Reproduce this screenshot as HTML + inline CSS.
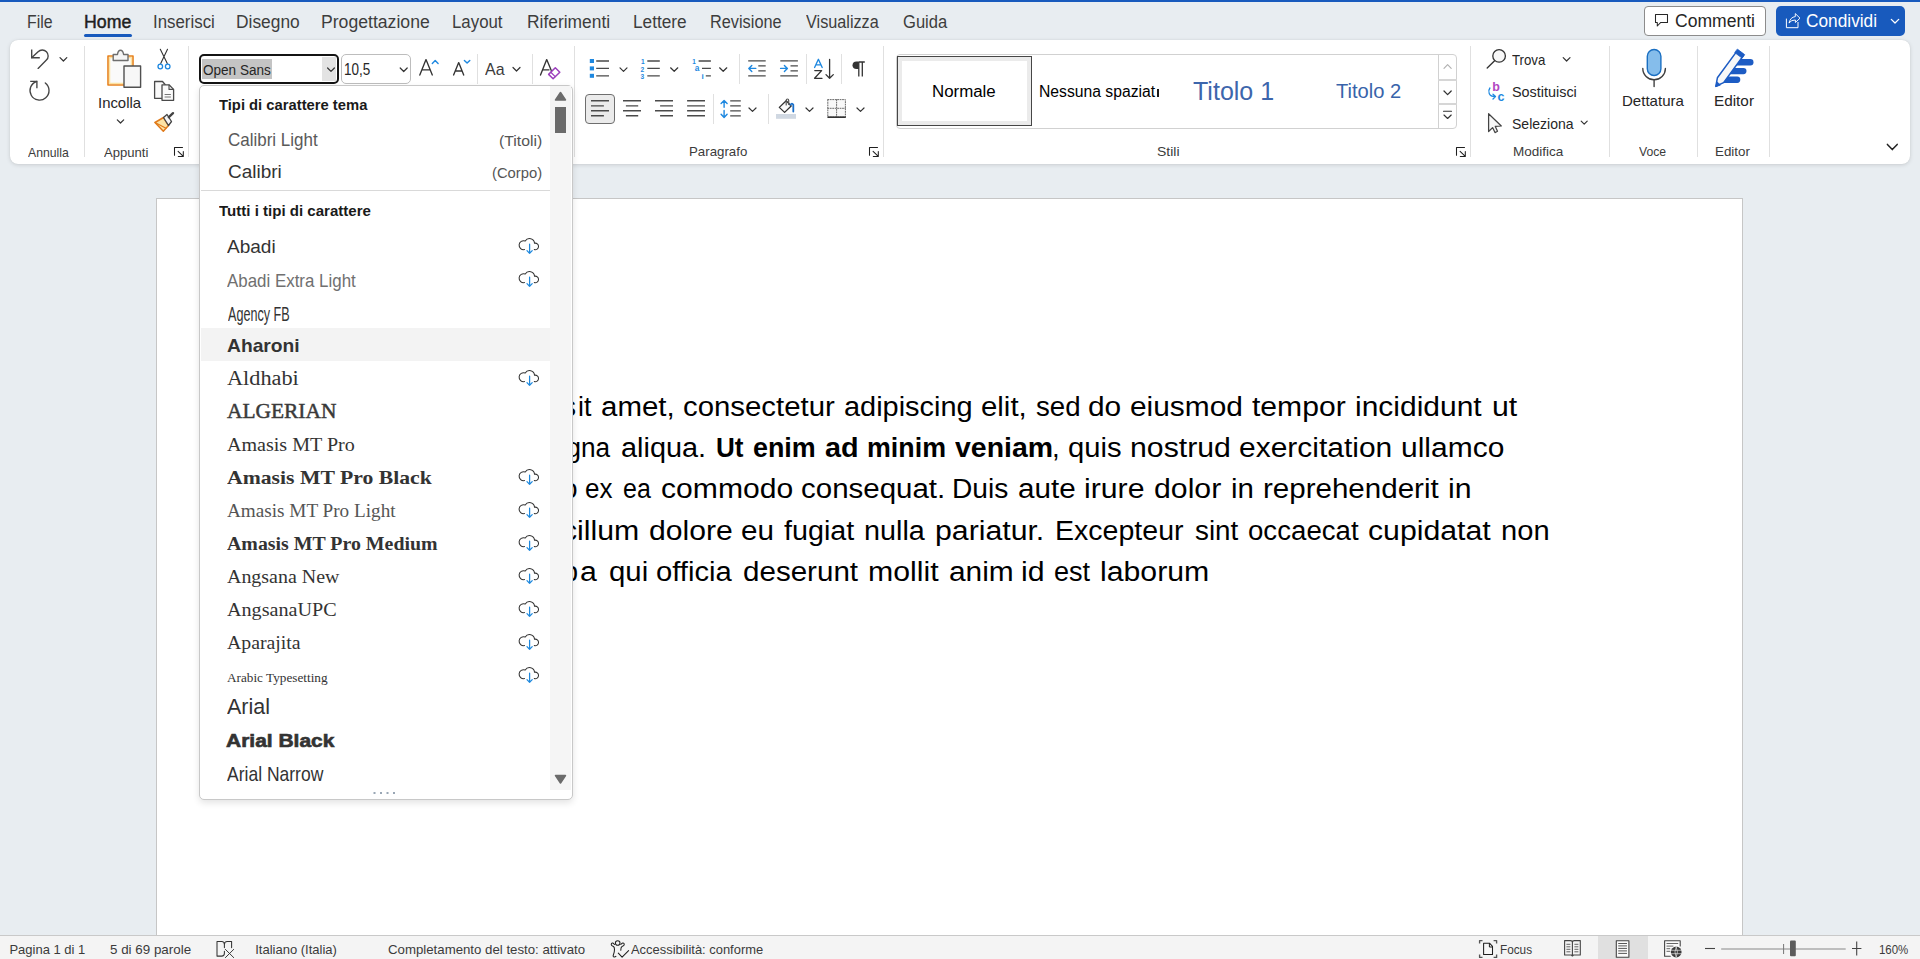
<!DOCTYPE html>
<html><head><meta charset="utf-8"><style>
html,body{margin:0;padding:0;width:1920px;height:959px;overflow:hidden;background:#e8edf1;position:relative}
.t{position:absolute;white-space:pre;transform-origin:0 0}
.a{position:absolute;box-sizing:border-box}
.dv{position:absolute;width:1px;background:#e0e0e0}
svg{position:absolute;overflow:visible}
#dd{position:absolute;left:0;top:0;z-index:10}

</style></head><body>
<div class="a" style="left:0;top:0;width:1920px;height:2px;background:#185abd"></div>
<div class="a" style="left:84px;top:34px;width:48px;height:3px;background:#185abd;border-radius:2px"></div>
<div class="a" style="left:1644px;top:6px;width:122px;height:30px;border:1px solid #8c8c8c;border-radius:4px;background:#fff"></div>
<div class="a" style="left:1776px;top:6px;width:129px;height:30px;background:#185abd;border-radius:5px"></div>
<!-- ribbon -->
<div class="a" style="left:10px;top:40px;width:1900px;height:124px;background:#fff;border-radius:8px;box-shadow:0 1px 4px rgba(0,0,0,.13),0 0 1px rgba(0,0,0,.12)"></div>
<div class="dv" style="left:84px;top:46px;height:111px"></div>
<div class="dv" style="left:188px;top:46px;height:111px"></div>
<div class="dv" style="left:574px;top:46px;height:111px"></div>
<div class="dv" style="left:883px;top:46px;height:111px"></div>
<div class="dv" style="left:1470px;top:46px;height:111px"></div>
<div class="dv" style="left:1609px;top:46px;height:111px"></div>
<div class="dv" style="left:1697px;top:46px;height:111px"></div>
<div class="dv" style="left:1769px;top:46px;height:111px"></div>
<div class="dv" style="left:477px;top:54px;height:30px"></div>
<div class="dv" style="left:532px;top:54px;height:30px"></div>
<div class="dv" style="left:739px;top:54px;height:30px"></div>
<div class="dv" style="left:806px;top:54px;height:30px"></div>
<div class="dv" style="left:841px;top:54px;height:30px"></div>
<div class="dv" style="left:713px;top:94px;height:30px"></div>
<div class="dv" style="left:768px;top:94px;height:30px"></div>
<!-- font box -->
<div class="a" style="left:199px;top:54px;width:140px;height:30px;border:2.5px solid #141414;border-radius:5px;background:#fff"></div>
<div class="a" style="left:202px;top:59px;width:70px;height:20px;background:#c4c4c4"></div>
<div class="a" style="left:322px;top:57px;width:14px;height:24px;background:#e3e3e3"></div>
<div class="a" style="left:341px;top:54px;width:70px;height:30px;border:1px solid #bdbdbd;border-radius:5px;background:#fff"></div>
<!-- align left selected -->
<div class="a" style="left:585px;top:94px;width:30px;height:30px;border:1px solid #6e6e6e;border-radius:4px;background:#ebebeb"></div>
<!-- styles gallery -->
<div class="a" style="left:896px;top:54px;width:561px;height:75px;border:1px solid #d1d1d1;border-radius:4px;background:#fff"></div>
<div class="a" style="left:897px;top:56px;width:135px;height:70px;border:1px solid #464646;background:#fff"></div>
<div class="a" style="left:898px;top:57px;width:133px;height:68px;border:4px solid #ebebeb"></div>
<div class="a" style="left:1438px;top:54px;width:1px;height:75px;background:#d1d1d1"></div>
<div class="a" style="left:1438px;top:79px;width:19px;height:2px;background:#d6d6d6"></div>
<div class="a" style="left:1438px;top:102.5px;width:19px;height:2px;background:#d6d6d6"></div>
<div class="a" style="left:1157px;top:89px;width:2px;height:8px;background:#1a1a1a"></div>
<!-- page -->
<div class="a" style="left:156px;top:198px;width:1587px;height:760px;border:1px solid #c6c6c6;background:#fff"></div>
<span class="t" style="left:562.50px;top:394.04px;font:400 27px/27px 'Liberation Sans';color:#000000;">s</span>
<span class="t" style="left:577.91px;top:394.04px;font:400 27px/27px 'Liberation Sans';color:#000000;transform:scaleX(0.9924);">it</span>
<span class="t" style="left:601.21px;top:394.04px;font:400 27px/27px 'Liberation Sans';color:#000000;transform:scaleX(1.0911);">amet,</span>
<span class="t" style="left:682.66px;top:394.04px;font:400 27px/27px 'Liberation Sans';color:#000000;transform:scaleX(1.0878);">consectetur</span>
<span class="t" style="left:843.93px;top:394.04px;font:400 27px/27px 'Liberation Sans';color:#000000;transform:scaleX(1.0715);">adipiscing</span>
<span class="t" style="left:980.91px;top:394.04px;font:400 27px/27px 'Liberation Sans';color:#000000;transform:scaleX(1.0882);">elit,</span>
<span class="t" style="left:1035.50px;top:394.04px;font:400 27px/27px 'Liberation Sans';color:#000000;transform:scaleX(1.0231);">sed</span>
<span class="t" style="left:1088.39px;top:394.04px;font:400 27px/27px 'Liberation Sans';color:#000000;transform:scaleX(1.1065);">do</span>
<span class="t" style="left:1129.89px;top:394.04px;font:400 27px/27px 'Liberation Sans';color:#000000;transform:scaleX(1.1066);">eiusmod</span>
<span class="t" style="left:1252.20px;top:394.04px;font:400 27px/27px 'Liberation Sans';color:#000000;transform:scaleX(1.1149);">tempor</span>
<span class="t" style="left:1355.29px;top:394.04px;font:400 27px/27px 'Liberation Sans';color:#000000;transform:scaleX(1.1103);">incididunt</span>
<span class="t" style="left:1491.88px;top:394.04px;font:400 27px/27px 'Liberation Sans';color:#000000;transform:scaleX(1.1200);">ut</span>
<span class="t" style="left:566.00px;top:434.94px;font:400 27px/27px 'Liberation Sans';color:#000000;">g</span>
<span class="t" style="left:581.03px;top:434.94px;font:400 27px/27px 'Liberation Sans';color:#000000;transform:scaleX(0.9695);">na</span>
<span class="t" style="left:620.53px;top:434.94px;font:400 27px/27px 'Liberation Sans';color:#000000;transform:scaleX(1.0693);">aliqua.</span>
<span class="t" style="left:715.73px;top:434.94px;font:700 27px/27px 'Liberation Sans';color:#000000;transform:scaleX(0.9655);">Ut</span>
<span class="t" style="left:752.75px;top:434.94px;font:700 27px/27px 'Liberation Sans';color:#000000;transform:scaleX(0.9957);">enim</span>
<span class="t" style="left:825.00px;top:434.94px;font:700 27px/27px 'Liberation Sans';color:#000000;transform:scaleX(1.0661);">ad</span>
<span class="t" style="left:866.51px;top:434.94px;font:700 27px/27px 'Liberation Sans';color:#000000;transform:scaleX(0.9935);">minim</span>
<span class="t" style="left:955.00px;top:434.94px;font:700 27px/27px 'Liberation Sans';color:#000000;transform:scaleX(1.0539);">veniam</span>
<span class="t" style="left:1051.95px;top:434.94px;font:400 27px/27px 'Liberation Sans';color:#000000;transform:scaleX(1.0250);">,</span>
<span class="t" style="left:1067.52px;top:434.94px;font:400 27px/27px 'Liberation Sans';color:#000000;transform:scaleX(1.0806);">quis</span>
<span class="t" style="left:1129.88px;top:434.94px;font:400 27px/27px 'Liberation Sans';color:#000000;transform:scaleX(1.1200);">nostrud</span>
<span class="t" style="left:1239.39px;top:434.94px;font:400 27px/27px 'Liberation Sans';color:#000000;transform:scaleX(1.1098);">exercitation</span>
<span class="t" style="left:1400.89px;top:434.94px;font:400 27px/27px 'Liberation Sans';color:#000000;transform:scaleX(1.1107);">ullamco</span>
<span class="t" style="left:562.50px;top:476.04px;font:400 27px/27px 'Liberation Sans';color:#000000;">o</span>
<span class="t" style="left:585.29px;top:476.04px;font:400 27px/27px 'Liberation Sans';color:#000000;transform:scaleX(0.9637);">ex</span>
<span class="t" style="left:622.83px;top:476.04px;font:400 27px/27px 'Liberation Sans';color:#000000;transform:scaleX(0.9245);">ea</span>
<span class="t" style="left:660.88px;top:476.04px;font:400 27px/27px 'Liberation Sans';color:#000000;transform:scaleX(1.1156);">commodo</span>
<span class="t" style="left:801.41px;top:476.04px;font:400 27px/27px 'Liberation Sans';color:#000000;transform:scaleX(1.0918);">consequat.</span>
<span class="t" style="left:952.41px;top:476.04px;font:400 27px/27px 'Liberation Sans';color:#000000;transform:scaleX(1.0434);">Duis</span>
<span class="t" style="left:1017.65px;top:476.04px;font:400 27px/27px 'Liberation Sans';color:#000000;transform:scaleX(1.0973);">aute</span>
<span class="t" style="left:1083.58px;top:476.04px;font:400 27px/27px 'Liberation Sans';color:#000000;transform:scaleX(1.1200);">irure</span>
<span class="t" style="left:1154.08px;top:476.04px;font:400 27px/27px 'Liberation Sans';color:#000000;transform:scaleX(1.1200);">dolor</span>
<span class="t" style="left:1231.31px;top:476.04px;font:400 27px/27px 'Liberation Sans';color:#000000;transform:scaleX(1.0896);">in</span>
<span class="t" style="left:1262.51px;top:476.04px;font:400 27px/27px 'Liberation Sans';color:#000000;transform:scaleX(1.0937);">reprehenderit</span>
<span class="t" style="left:1448.08px;top:476.04px;font:400 27px/27px 'Liberation Sans';color:#000000;transform:scaleX(1.1200);">in</span>
<span class="t" style="left:563.50px;top:517.64px;font:400 27px/27px 'Liberation Sans';color:#000000;">c</span>
<span class="t" style="left:576.98px;top:517.64px;font:400 27px/27px 'Liberation Sans';color:#000000;transform:scaleX(1.1200);">illum</span>
<span class="t" style="left:649.38px;top:517.64px;font:400 27px/27px 'Liberation Sans';color:#000000;transform:scaleX(1.1159);">dolore</span>
<span class="t" style="left:741.40px;top:517.64px;font:400 27px/27px 'Liberation Sans';color:#000000;transform:scaleX(1.0976);">eu</span>
<span class="t" style="left:783.75px;top:517.64px;font:400 27px/27px 'Liberation Sans';color:#000000;transform:scaleX(1.0631);">fugiat</span>
<span class="t" style="left:863.93px;top:517.64px;font:400 27px/27px 'Liberation Sans';color:#000000;transform:scaleX(1.0652);">nulla</span>
<span class="t" style="left:935.13px;top:517.64px;font:400 27px/27px 'Liberation Sans';color:#000000;transform:scaleX(1.1200);">pariatur.</span>
<span class="t" style="left:1055.49px;top:517.64px;font:400 27px/27px 'Liberation Sans';color:#000000;transform:scaleX(1.0571);">Excepteur</span>
<span class="t" style="left:1194.50px;top:517.64px;font:400 27px/27px 'Liberation Sans';color:#000000;transform:scaleX(1.0279);">sint</span>
<span class="t" style="left:1247.68px;top:517.64px;font:400 27px/27px 'Liberation Sans';color:#000000;transform:scaleX(1.0236);">occaecat</span>
<span class="t" style="left:1368.18px;top:517.64px;font:400 27px/27px 'Liberation Sans';color:#000000;transform:scaleX(1.1200);">cupidatat</span>
<span class="t" style="left:1500.92px;top:517.64px;font:400 27px/27px 'Liberation Sans';color:#000000;transform:scaleX(1.0783);">non</span>
<span class="t" style="left:563.00px;top:559.14px;font:400 27px/27px 'Liberation Sans';color:#000000;">p</span>
<span class="t" style="left:580.38px;top:559.14px;font:400 27px/27px 'Liberation Sans';color:#000000;transform:scaleX(1.1200);">a</span>
<span class="t" style="left:608.91px;top:559.14px;font:400 27px/27px 'Liberation Sans';color:#000000;transform:scaleX(1.0872);">qui</span>
<span class="t" style="left:656.42px;top:559.14px;font:400 27px/27px 'Liberation Sans';color:#000000;transform:scaleX(1.0817);">officia</span>
<span class="t" style="left:742.66px;top:559.14px;font:400 27px/27px 'Liberation Sans';color:#000000;transform:scaleX(1.0949);">deserunt</span>
<span class="t" style="left:867.63px;top:559.14px;font:400 27px/27px 'Liberation Sans';color:#000000;transform:scaleX(1.1200);">mollit</span>
<span class="t" style="left:948.89px;top:559.14px;font:400 27px/27px 'Liberation Sans';color:#000000;transform:scaleX(1.1065);">anim</span>
<span class="t" style="left:1021.38px;top:559.14px;font:400 27px/27px 'Liberation Sans';color:#000000;transform:scaleX(1.1200);">id</span>
<span class="t" style="left:1053.90px;top:559.14px;font:400 27px/27px 'Liberation Sans';color:#000000;transform:scaleX(1.0024);">est</span>
<span class="t" style="left:1099.88px;top:559.14px;font:400 27px/27px 'Liberation Sans';color:#000000;transform:scaleX(1.1200);">laborum</span>
<!-- status bar -->
<div class="a" style="left:0;top:935px;width:1920px;height:24px;background:#f4f4f4;border-top:1px solid #c9c9c9"></div>
<div class="a" style="left:1598px;top:936px;width:50px;height:23px;background:#e0e0e0"></div>
<span class="t" style="left:26.59px;top:13.68px;font:400 17.5px/17.5px 'Liberation Sans';color:#3d3d3d;transform:scaleX(0.9068);">File</span>
<span class="t" style="left:83.99px;top:13.68px;font:400 17.5px/17.5px 'Liberation Sans';color:#1f1f1f;transform:scaleX(1.0123);-webkit-text-stroke:0.45px #1f1f1f;">Home</span>
<span class="t" style="left:153.04px;top:13.68px;font:400 17.5px/17.5px 'Liberation Sans';color:#3d3d3d;transform:scaleX(0.9632);">Inserisci</span>
<span class="t" style="left:236.01px;top:13.68px;font:400 17.5px/17.5px 'Liberation Sans';color:#3d3d3d;transform:scaleX(0.9924);">Disegno</span>
<span class="t" style="left:320.99px;top:13.68px;font:400 17.5px/17.5px 'Liberation Sans';color:#3d3d3d;transform:scaleX(1.0070);">Progettazione</span>
<span class="t" style="left:451.84px;top:13.68px;font:400 17.5px/17.5px 'Liberation Sans';color:#3d3d3d;transform:scaleX(0.9617);">Layout</span>
<span class="t" style="left:527.26px;top:13.68px;font:400 17.5px/17.5px 'Liberation Sans';color:#3d3d3d;transform:scaleX(0.9940);">Riferimenti</span>
<span class="t" style="left:633.26px;top:13.68px;font:400 17.5px/17.5px 'Liberation Sans';color:#3d3d3d;transform:scaleX(0.9858);">Lettere</span>
<span class="t" style="left:710.32px;top:13.68px;font:400 17.5px/17.5px 'Liberation Sans';color:#3d3d3d;transform:scaleX(0.9319);">Revisione</span>
<span class="t" style="left:805.75px;top:13.68px;font:400 17.5px/17.5px 'Liberation Sans';color:#3d3d3d;transform:scaleX(0.9272);">Visualizza</span>
<span class="t" style="left:902.50px;top:13.68px;font:400 17.5px/17.5px 'Liberation Sans';color:#3d3d3d;transform:scaleX(0.9475);">Guida</span>
<span class="t" style="left:1674.60px;top:12.46px;font:400 18px/18px 'Liberation Sans';color:#262626;transform:scaleX(0.9751);">Commenti</span>
<span class="t" style="left:1806.40px;top:12.46px;font:400 18px/18px 'Liberation Sans';color:#ffffff;transform:scaleX(0.9597);">Condividi</span>
<span class="t" style="left:28.00px;top:146.09px;font:400 13px/13px 'Liberation Sans';color:#3b3b3b;transform:scaleX(0.9402);">Annulla</span>
<span class="t" style="left:104.00px;top:146.09px;font:400 13px/13px 'Liberation Sans';color:#3b3b3b;transform:scaleX(1.0067);">Appunti</span>
<span class="t" style="left:98.47px;top:95.62px;font:400 14.5px/14.5px 'Liberation Sans';color:#262626;transform:scaleX(1.0275);">Incolla</span>
<span class="t" style="left:689.48px;top:145.49px;font:400 13px/13px 'Liberation Sans';color:#3b3b3b;transform:scaleX(1.0204);">Paragrafo</span>
<span class="t" style="left:1157.30px;top:145.09px;font:400 13px/13px 'Liberation Sans';color:#3b3b3b;transform:scaleX(1.0779);">Stili</span>
<span class="t" style="left:1513.36px;top:145.49px;font:400 13px/13px 'Liberation Sans';color:#3b3b3b;transform:scaleX(1.0399);">Modifica</span>
<span class="t" style="left:1639.30px;top:145.49px;font:400 13px/13px 'Liberation Sans';color:#3b3b3b;transform:scaleX(0.9378);">Voce</span>
<span class="t" style="left:1715.37px;top:145.49px;font:400 13px/13px 'Liberation Sans';color:#3b3b3b;transform:scaleX(1.0288);">Editor</span>
<span class="t" style="left:1511.70px;top:52.72px;font:400 14.5px/14.5px 'Liberation Sans';color:#262626;transform:scaleX(0.9129);">Trova</span>
<span class="t" style="left:1511.70px;top:84.72px;font:400 14.5px/14.5px 'Liberation Sans';color:#262626;transform:scaleX(0.9931);">Sostituisci</span>
<span class="t" style="left:1511.70px;top:116.72px;font:400 14.5px/14.5px 'Liberation Sans';color:#262626;transform:scaleX(0.9672);">Seleziona</span>
<span class="t" style="left:1621.66px;top:93.62px;font:400 14.5px/14.5px 'Liberation Sans';color:#262626;transform:scaleX(1.0373);">Dettatura</span>
<span class="t" style="left:1713.54px;top:93.62px;font:400 14.5px/14.5px 'Liberation Sans';color:#262626;transform:scaleX(1.0553);">Editor</span>
<span class="t" style="left:931.75px;top:83.95px;font:400 16px/16px 'Liberation Sans';color:#000000;transform:scaleX(1.0544);">Normale</span>
<span class="t" style="left:1038.72px;top:83.95px;font:400 16px/16px 'Liberation Sans';color:#000000;transform:scaleX(0.9818);">Nessuna spaziat</span>
<span class="t" style="left:1193.40px;top:78.91px;font:400 25.5px/25.5px 'Liberation Sans';color:#3d66ac;transform:scaleX(0.9817);">Titolo 1</span>
<span class="t" style="left:1336.40px;top:80.84px;font:400 20.5px/20.5px 'Liberation Sans';color:#3863aa;transform:scaleX(0.9824);">Titolo 2</span>
<span class="t" style="left:344.16px;top:61.65px;font:400 16px/16px 'Liberation Sans';color:#262626;transform:scaleX(0.8432);">10,5</span>
<span class="t" style="left:202.50px;top:61.98px;font:400 15.5px/15.5px 'Liberation Sans';color:#262626;transform:scaleX(0.8740);">Open Sans</span>
<span class="t" style="left:485.00px;top:61.11px;font:400 17px/17px 'Liberation Sans';color:#3b3b3b;transform:scaleX(0.9373);">Aa</span>
<span class="t" style="left:9.40px;top:942.99px;font:400 13px/13px 'Liberation Sans';color:#3b3b3b;">Pagina 1 di 1</span>
<span class="t" style="left:110.40px;top:942.99px;font:400 13px/13px 'Liberation Sans';color:#3b3b3b;transform:scaleX(1.0293);">5 di 69 parole</span>
<span class="t" style="left:255.25px;top:942.99px;font:400 13px/13px 'Liberation Sans';color:#3b3b3b;">Italiano (Italia)</span>
<span class="t" style="left:387.50px;top:942.99px;font:400 13px/13px 'Liberation Sans';color:#3b3b3b;transform:scaleX(1.0179);">Completamento del testo: attivato</span>
<span class="t" style="left:631.40px;top:942.99px;font:400 13px/13px 'Liberation Sans';color:#3b3b3b;transform:scaleX(0.9939);">Accessibilità: conforme</span>
<span class="t" style="left:1499.59px;top:942.99px;font:400 13px/13px 'Liberation Sans';color:#3b3b3b;transform:scaleX(0.9054);">Focus</span>
<span class="t" style="left:1879.00px;top:942.99px;font:400 13px/13px 'Liberation Sans';color:#3b3b3b;transform:scaleX(0.8816);">160%</span>
<svg style="left:0;top:0;z-index:2" width="1920" height="959" viewBox="0 0 1920 959">
<g fill="none" stroke-linecap="round" stroke-linejoin="round">
<!-- undo -->
<path d="M38.1 68.4 L46.4 60.1 A5.9 5.9 0 1 0 38.1 51.7 L31.9 57.6" stroke="#444" stroke-width="1.35"/>
<path d="M31.7 49.6 V57.7 H39.8" stroke="#444" stroke-width="1.35" stroke-linecap="butt" stroke-linejoin="miter"/>
<path d="M60 57.6 L63.4 61 L66.8 57.6" stroke="#333" stroke-width="1.2"/>
<!-- redo -->
<path d="M45.3 83 A9.5 9.5 0 1 1 36.6 81.5" stroke="#444" stroke-width="1.35"/>
<path d="M30.2 81.4 H36.9 V88.2" stroke="#444" stroke-width="1.35" stroke-linecap="butt" stroke-linejoin="miter"/>
<!-- paste -->
<rect x="108" y="56" width="25" height="29" fill="#fafafa" stroke="#e8821c" stroke-width="1.6"/>
<rect x="109.6" y="57.6" width="21.8" height="25.8" fill="none" stroke="#fce2a0" stroke-width="1.3"/>
<path d="M113.2 60.5 V54.5 H117.5 Q118 50.3 120.5 50.3 Q123 50.3 123.6 54.5 H128 V60.5 Z" fill="#f5f5f5" stroke="#6e6e6e" stroke-width="1.4"/>
<rect x="124" y="66" width="16.6" height="21.3" fill="#f7f7f7" stroke="#505050" stroke-width="1.4"/>
<path d="M117.3 119.8 L120.5 123 L123.7 119.8" stroke="#333" stroke-width="1.2"/>
<!-- scissors -->
<path d="M160.3 49.3 L167.3 63.5 M167.5 49.3 L160.7 63.5" stroke="#333" stroke-width="1.1"/>
<circle cx="160.3" cy="66.5" r="2.3" stroke="#1e88e0" stroke-width="1.3"/>
<circle cx="167.7" cy="66.5" r="2.3" stroke="#1e88e0" stroke-width="1.3"/>
<!-- copy -->
<path d="M161.5 98.3 H154.6 V81.5 H162.5 L165.3 84.7" stroke="#4a4a4a" stroke-width="1.3" fill="#fafafa"/>
<path d="M162 100.3 V84.8 H169 L173.6 89.4 V100.3 Z" fill="#fafafa" stroke="#4a4a4a" stroke-width="1.3"/>
<path d="M169 85 V89.4 H173.4" stroke="#4a4a4a" stroke-width="1.1"/>
<path d="M165 94.5 H170.5 M165 97 H170.5" stroke="#777" stroke-width="1"/>
<!-- format painter -->
<path d="M155 122.5 L163.5 117.5 L168.5 125.5 L163.3 131.3 Z" fill="#fce3a5" stroke="#e07a1a" stroke-width="1.5"/>
<path d="M155 122.5 L166 128.2" stroke="#e07a1a" stroke-width="1.2"/>
<path d="M163.5 117.5 L167 114.5 L171.5 121.5 L168.5 125.5 Z" fill="#f5f5f5" stroke="#444" stroke-width="1.3"/>
<path d="M168.8 117.2 L173 113.2" stroke="#444" stroke-width="2.4"/>
<!-- font box chevron / size chevron -->
<path d="M327.6 68 L331 71.4 L334.4 68" stroke="#333" stroke-width="1.2"/>
<path d="M400.2 68 L403.7 71.5 L407.2 68" stroke="#333" stroke-width="1.2"/>
<!-- grow / shrink -->
<path d="M419.8 75 L426 59.6 L432.3 75 M422 69.8 H430" stroke="#333" stroke-width="1.35"/>
<path d="M432.3 63.4 L435.2 60.5 L438.1 63.4" stroke="#1e88e0" stroke-width="1.4"/>
<path d="M453.6 75 L458.7 62.6 L463.7 75 M455.5 71 H461.9" stroke="#333" stroke-width="1.35"/>
<path d="M464.4 60.4 L467.1 63.1 L469.8 60.4" stroke="#1e88e0" stroke-width="1.4"/>
<!-- Aa chevron -->
<path d="M513 67.5 L516.5 71 L520 67.5" stroke="#333" stroke-width="1.2"/>
<!-- clear formatting -->
<path d="M540.5 75 L546.7 59.6 L551.5 71" stroke="#333" stroke-width="1.35"/>
<path d="M543 69.8 H549" stroke="#333" stroke-width="1.35"/>
<path d="M548.6 74.4 L555.3 67.8 L559.8 72.2 L553.1 78.8 Z" fill="#fff" stroke="#9c3fbd" stroke-width="1.5"/>
<path d="M550.8 72.2 L555.2 76.6" stroke="#9c3fbd" stroke-width="1.3"/>
<!-- bullets -->
<g fill="#1e88e0" stroke="none"><rect x="589.8" y="59" width="4.2" height="4"/><rect x="589.8" y="66.4" width="4.2" height="4"/><rect x="589.8" y="73.8" width="4.2" height="4"/></g>
<path d="M596.2 61 H609 M596.2 68.4 H609 M596.2 75.8 H609" stroke="#4a4a4a" stroke-width="1.3" stroke-linecap="butt"/>
<path d="M620 67.8 L623.5 71.3 L627 67.8" stroke="#333" stroke-width="1.2"/>
<!-- numbering -->
<g fill="#1e88e0" font-family="Liberation Sans" font-weight="700" font-size="6.6" stroke="none"><text x="641" y="64">1</text><text x="640.6" y="71.5">2</text><text x="640.6" y="79">3</text></g>
<path d="M647.3 61 H659.8 M647.3 68.4 H659.8 M647.3 75.8 H659.8" stroke="#4a4a4a" stroke-width="1.3" stroke-linecap="butt"/>
<path d="M670.6 67.8 L674.2 71.3 L677.8 67.8" stroke="#333" stroke-width="1.2"/>
<!-- multilevel -->
<g fill="#1e88e0" font-family="Liberation Sans" font-weight="700" stroke="none"><text x="692.3" y="64.3" font-size="6.4">1</text><text x="694.8" y="71.4" font-size="8.3">a</text><text x="701.6" y="79.3" font-size="8">i</text></g>
<path d="M698.6 61 H710.9 M702 68.4 H710.9 M705.8 75.8 H710.9" stroke="#4a4a4a" stroke-width="1.3" stroke-linecap="butt"/>
<path d="M719.6 67.8 L723.2 71.3 L726.8 67.8" stroke="#333" stroke-width="1.2"/>
<!-- decrease / increase indent -->
<path d="M748.2 60.8 H765.7 M758.3 65.9 H765.7 M758.3 70.8 H765.7 M748.2 75.8 H765.7" stroke="#4a4a4a" stroke-width="1.35" stroke-linecap="butt"/>
<path d="M749 68.4 H755.8 M751.8 65.4 L748.8 68.4 L751.8 71.4" stroke="#1e88e0" stroke-width="1.4"/>
<path d="M780.3 60.8 H797.9 M790.5 65.9 H797.9 M790.5 70.8 H797.9 M780.3 75.8 H797.9" stroke="#4a4a4a" stroke-width="1.35" stroke-linecap="butt"/>
<path d="M780.6 68.4 H787.3 M784.4 65.4 L787.4 68.4 L784.4 71.4" stroke="#1e88e0" stroke-width="1.4"/>
<!-- sort -->
<path d="M814.6 67.5 L818.4 59.3 L822.2 67.5 M815.9 64.8 H820.9" stroke="#1e88e0" stroke-width="1.35"/>
<path d="M814.8 70.6 H821.6 L814.6 78.3 H822" stroke="#333" stroke-width="1.35"/>
<path d="M829.6 59.3 V78.3 M826 74.6 L829.6 78.3 L833.3 74.6" stroke="#333" stroke-width="1.3"/>
<!-- pilcrow -->
<path d="M858.8 62 H864.8 M858.8 62 V76.6 M862.3 62 V76.6" stroke="#333" stroke-width="1.3" stroke-linecap="butt"/>
<path d="M858.8 61.5 H856.5 Q852.5 61.5 852.5 65.3 Q852.5 69 856.5 69 H858.8 Z" fill="#333" stroke="none"/>
<!-- align -->
<path d="M591 100.8 H609 M591 105.9 H603.9 M591 110.8 H609 M591 115.8 H603.9" stroke="#4a4a4a" stroke-width="1.4" stroke-linecap="butt"/>
<path d="M623 100.8 H641 M625.9 105.9 H638.2 M623 110.8 H641 M625.9 115.8 H638.2" stroke="#4a4a4a" stroke-width="1.4" stroke-linecap="butt"/>
<path d="M655 100.8 H673 M660.1 105.9 H673 M655 110.8 H673 M660.1 115.8 H673" stroke="#4a4a4a" stroke-width="1.4" stroke-linecap="butt"/>
<path d="M687.1 100.8 H705 M687.1 105.9 H705 M687.1 110.8 H705 M687.1 115.8 H705" stroke="#4a4a4a" stroke-width="1.4" stroke-linecap="butt"/>
<!-- line spacing -->
<path d="M724.1 100.8 V107.3 M721.1 103.6 L724.1 100.6 L727.1 103.6 M724.1 110.4 V117.2 M721.1 114.2 L724.1 117.4 L727.1 114.2" stroke="#1e88e0" stroke-width="1.4"/>
<path d="M730.2 100.8 H740.8 M730.2 105.8 H740.8 M730.2 110.8 H740.8 M730.2 115.8 H740.8" stroke="#4a4a4a" stroke-width="1.35" stroke-linecap="butt"/>
<path d="M749 108 L752.5 111.4 L756 108" stroke="#333" stroke-width="1.2"/>
<!-- shading -->
<rect x="776" y="114" width="20" height="4.8" fill="#d0d8e2" stroke="none"/>
<path d="M779.3 107.4 L786.2 100.8 L791.2 106 L784.6 112.4 Z" fill="#fafafa" stroke="#333" stroke-width="1.3"/>
<path d="M786.2 105 V100.5 Q786.2 99 787.5 99 Q788.7 99 788.7 100.5 V104.5" stroke="#555" stroke-width="1.2"/>
<path d="M790.5 104.8 Q792 102.5 793.3 104.8 V111.5" stroke="#1a6fc9" stroke-width="1.8"/>
<path d="M806 108 L809.5 111.4 L813 108" stroke="#333" stroke-width="1.2"/>
<!-- borders -->
<rect x="827.8" y="99.6" width="17.6" height="17.4" fill="#f8f8f8" stroke="#6a6a6a" stroke-width="1" stroke-dasharray="1 1.45"/>
<path d="M836.6 99.6 V117 M827.8 108.3 H845.4" stroke="#6a6a6a" stroke-width="1" stroke-dasharray="1 1.45"/>
<path d="M827.5 117.2 H845.8" stroke="#333" stroke-width="1.6" stroke-linecap="butt"/>
<path d="M857 108 L860.5 111.4 L864 108" stroke="#333" stroke-width="1.2"/>
<!-- launchers -->
<path d="M174.5 155.3 V147.4 H182.5 M178.1 151.3 L183.3 156.4 M178.3 156.4 H183.3 V151.5" stroke="#1f1f1f" stroke-width="1.05"/>
<path d="M869.5 155.3 V147.4 H877.5 M873.1 151.3 L878.3 156.4 M873.3 156.4 H878.3 V151.5" stroke="#1f1f1f" stroke-width="1.05"/>
<path d="M1456.5 155.3 V147.4 H1464.5 M1460.1 151.3 L1465.3 156.4 M1460.3 156.4 H1465.3 V151.5" stroke="#1f1f1f" stroke-width="1.05"/>
<!-- styles gallery scroll -->
<path d="M1444 68.3 L1447.6 64.6 L1451.2 68.3" stroke="#b0b0b0" stroke-width="1.1"/>
<path d="M1444 91 L1447.6 94.6 L1451.2 91" stroke="#333" stroke-width="1.25"/>
<path d="M1443.5 111.2 H1451.5 M1444 115 L1447.6 118.5 L1451.2 115" stroke="#333" stroke-width="1.15"/>
<!-- find -->
<circle cx="1499.1" cy="55.9" r="6.3" fill="#f8f8f8" stroke="#333" stroke-width="1.3"/>
<path d="M1494.6 60.7 L1487.2 68" stroke="#333" stroke-width="1.35"/>
<path d="M1563.2 57.6 L1566.6 61 L1570 57.6" stroke="#333" stroke-width="1.2"/>
<!-- replace -->
<text x="1492.3" y="90.6" font-family="Liberation Sans" font-size="12.5" font-weight="700" fill="#b146c2" stroke="none">b</text>
<text x="1497.4" y="101.3" font-family="Liberation Sans" font-size="12.5" font-weight="700" fill="#1e88e0" stroke="none">c</text>
<path d="M1489.9 88 Q1488 90.5 1489.2 93.5 Q1490.3 96.6 1495.5 96.6 M1493 94.3 L1495.5 96.6 L1493 99" stroke="#1e88e0" stroke-width="1.3"/>
<!-- select -->
<path d="M1488.6 113.7 V131.5 L1492.6 127.6 L1495 132.6 L1497.5 131.3 L1495.3 126.4 L1501.3 126 Z" fill="#f8f8f8" stroke="#444" stroke-width="1.25"/>
<path d="M1581.2 121.2 L1584.2 124.2 L1587.2 121.2" stroke="#333" stroke-width="1.2"/>
<!-- mic -->
<path d="M1642.8 68.5 A11.3 11.3 0 0 0 1665.4 68.5" stroke="#404040" stroke-width="1.4"/>
<path d="M1654.1 80 V86.6" stroke="#404040" stroke-width="1.4"/>
<rect x="1647.3" y="49.5" width="13.6" height="26" rx="6.8" fill="#85bdeb" stroke="#1a6fc2" stroke-width="1.4"/>
<!-- editor -->
<g fill="#1d5cc4" stroke="none">
<rect x="1734" y="59" width="19.5" height="6.4" rx="3.2"/>
<rect x="1727" y="68" width="19.5" height="6.2" rx="3.1"/>
<rect x="1720" y="76.6" width="20.3" height="6.3" rx="3.1"/>
</g>
<path d="M1715.8 86.3 L1717.4 77.8 L1737.3 50.6 L1743.7 55.3 L1723.6 82.6 Z" fill="#f8f8f8" stroke="#1d5cc4" stroke-width="1.5"/>
<path d="M1737.6 49.3 L1744.6 54.6 L1742 58 L1735 52.8 Z" fill="#1d5cc4" stroke="#1d5cc4" stroke-width="0.8"/>
<path d="M1715.8 86.3 L1717.2 82 L1720 84.8 Z" fill="#1d5cc4" stroke="#1d5cc4" stroke-width="1"/>
<!-- ribbon collapse -->
<path d="M1887.4 144.4 L1892.3 149.6 L1897.2 144.4" stroke="#222" stroke-width="1.5"/>
<!-- comment icon -->
<path d="M1655.5 14.5 H1667.5 V22.4 H1660.8 L1657.3 26 V22.4 H1655.5 Z" stroke="#262626" stroke-width="1.05"/>
<!-- share icon -->
<path d="M1786.4 19 V27.7 H1798 V22.4" stroke="#fff" stroke-width="1"/>
<path d="M1789.2 22.6 Q1790.3 17.2 1795.3 16.6 V13.6 L1800 18.2 L1795.4 22.5 V20 Q1791.5 19.8 1789.2 22.6 Z" stroke="#fff" stroke-width="0.95"/>
<path d="M1891.3 19.4 L1895 23 L1898.7 19.4" stroke="#fff" stroke-width="1.3"/>
<!-- status: proofing -->
<path d="M224.4 947.6 V944.5 Q224.4 941.5 221.7 941.5 H217 V956.1 H221.7 Q224.4 956.1 224.4 953.2 V951.3 M224.4 944.5 Q224.4 941.5 227.2 941.5 H231.6 V947.6" stroke="#333" stroke-width="1.05"/>
<path d="M225.4 949.4 L233.7 957.6 M233.7 949.4 L225.4 957.6" stroke="#333" stroke-width="0.95"/>
<!-- accessibility -->
<circle cx="617.7" cy="943" r="2.3" stroke="#222" stroke-width="1.05"/>
<path d="M614.5 944.5 Q612.5 942 611.5 943.5 Q610.5 945.5 613.5 946.5 Q614.5 947.2 614.5 949.5 Q614.5 952 613.5 954.5 Q612.5 957 614.3 957 Q615.4 957 615.9 956.4" stroke="#222" stroke-width="1.05"/>
<path d="M620.8 944.5 Q623 942 624 943.5 Q625 945.5 622 946.5 Q620.8 947.2 620.8 950.3" stroke="#222" stroke-width="1.05"/>
<path d="M618.3 953.2 L622.1 957.1 L628.6 950.6" stroke="#222" stroke-width="1.1"/>
<!-- focus -->
<path d="M1483.6 943.3 H1489.7 L1492.5 946.4 V954.5 H1483.6 Z" fill="#f7f7f7" stroke="#1f1f1f" stroke-width="1.05"/>
<path d="M1489.4 943.5 V947 H1492.4" stroke="#1f1f1f" stroke-width="1"/>
<path d="M1479.6 943.6 V940.6 H1482.5 M1493.6 940.6 H1496.6 V943.6 M1479.6 954.5 V957.4 H1482.5 M1496.6 954.5 V957.4 H1493.6" stroke="#555" stroke-width="1.35" stroke-linecap="butt"/>
<!-- read mode -->
<path d="M1564.6 940.6 H1570.5 Q1572.4 940.6 1572.4 942.5 Q1572.4 940.6 1574.3 940.6 H1580.3 V955 H1573.5 L1572.4 956 L1571.3 955 H1564.6 Z M1572.4 942.5 V955.5" stroke="#444" stroke-width="1.1"/>
<path d="M1566.8 944.3 H1570 M1566.8 946.8 H1570 M1566.8 949.3 H1570 M1566.8 951.8 H1570 M1574.8 944.3 H1578 M1574.8 946.8 H1578 M1574.8 949.3 H1578 M1574.8 951.8 H1578" stroke="#555" stroke-width="0.9"/>
<!-- print layout -->
<rect x="1616.3" y="940.7" width="12.6" height="16.5" fill="#fafafa" stroke="#444" stroke-width="1.1"/>
<path d="M1618.6 943.5 H1626.6 M1618.6 945.9 H1626.6 M1618.6 948.4 H1626.6 M1618.6 950.9 H1626.6 M1618.6 953.4 H1626.6" stroke="#444" stroke-width="0.9"/>
<!-- web layout -->
<path d="M1670.3 956.3 H1664.6 V940.7 H1680.2 V946" stroke="#444" stroke-width="1.1" fill="#fafafa"/>
<path d="M1666.9 943.5 H1677.8 M1666.9 946.1 H1673 M1666.9 948.7 H1669.8 M1666.9 951.3 H1669.8" stroke="#555" stroke-width="0.9"/>
<circle cx="1676.2" cy="952" r="5.4" fill="#3a3a3a" stroke="none"/>
<path d="M1676.2 946.8 Q1673.6 952 1676.2 957.2 Q1678.8 952 1676.2 946.8 M1671 950.3 H1681.4 M1671 953.7 H1681.4" stroke="#fafafa" stroke-width="0.6"/>
<!-- zoom -->
<path d="M1705 948.5 H1715" stroke="#444" stroke-width="1.1" stroke-linecap="butt"/>
<path d="M1721.2 949 H1845.7" stroke="#888" stroke-width="1" stroke-linecap="butt"/>
<path d="M1783.6 944 V954" stroke="#777" stroke-width="1" stroke-linecap="butt"/>
<rect x="1790" y="940.5" width="5.8" height="15.7" rx="1" fill="#5c5c5c" stroke="none"/>
<path d="M1852 948.5 H1861.4 M1856.7 941.6 V955.4" stroke="#444" stroke-width="1.1" stroke-linecap="butt"/>
</g>
</svg>

<!-- dropdown -->
<div id="dd">
<div class="a" style="left:199px;top:85px;width:374px;height:715px;background:#fff;border:1px solid #c8c8c8;border-radius:5px;box-shadow:0 3px 7px rgba(0,0,0,.11)"></div>
<div class="a" style="left:201px;top:190px;width:349px;height:1px;background:#d9d9d9"></div>
<div class="a" style="left:201px;top:328px;width:349px;height:33px;background:#f3f3f3"></div>
<div class="a" style="left:550px;top:86px;width:21px;height:704px;background:#f5f5f5"></div>
<div class="a" style="left:555px;top:107px;width:11px;height:26px;background:#6b6b6b"></div>
<svg style="left:0;top:0" width="1" height="1"><path d="M555.5 100 L560.5 92.5 L565.5 100 Z" fill="#6b6b6b" stroke="#6b6b6b" stroke-linejoin="round" stroke-width="1.5"/><path d="M555.5 775.5 L560.5 783 L565.5 775.5 Z" fill="#6b6b6b" stroke="#6b6b6b" stroke-linejoin="round" stroke-width="1.5"/>
<g fill="#9aa7b5"><rect x="373.5" y="792" width="2" height="2"/><rect x="380" y="792" width="2" height="2"/><rect x="386.5" y="792" width="2" height="2"/><rect x="393" y="792" width="2" height="2"/></g></svg>
<span class="t" style="left:218.50px;top:97.72px;font:700 14.5px/14.5px 'Liberation Sans';color:#1a1a1a;transform:scaleX(1.0189);">Tipi di carattere tema</span>
<span class="t" style="left:227.70px;top:130.11px;font:400 19px/19px 'Liberation Sans';color:#5a5a5a;transform:scaleX(0.8936);">Calibri Light</span>
<span class="t" style="left:498.50px;top:132.60px;font:400 15px/15px 'Liberation Sans';color:#555555;transform:scaleX(1.0509);">(Titoli)</span>
<span class="t" style="left:227.70px;top:164.08px;font:400 17.5px/17.5px 'Liberation Sans';color:#333333;transform:scaleX(1.0840);">Calibri</span>
<span class="t" style="left:491.60px;top:165.00px;font:400 15px/15px 'Liberation Sans';color:#555555;transform:scaleX(0.9853);">(Corpo)</span>
<span class="t" style="left:218.50px;top:203.82px;font:700 14.5px/14.5px 'Liberation Sans';color:#1a1a1a;transform:scaleX(1.0383);">Tutti i tipi di carattere</span>
<span class="t" style="left:227.00px;top:237.64px;font:400 18.5px/18.5px 'Liberation Sans';color:#333333;transform:scaleX(1.0280);">Abadi</span>
<span class="t" style="left:227.00px;top:270.61px;font:400 19px/19px 'Liberation Sans';color:#707070;transform:scaleX(0.8898);">Abadi Extra Light</span>
<span class="t" style="left:227.70px;top:302.62px;font:400 21px/21px 'Liberation Sans';color:#333333;transform:scaleX(0.5998);">Agency FB</span>
<span class="t" style="left:227.00px;top:336.21px;font:700 19px/19px 'Liberation Sans';color:#333333;transform:scaleX(1.0128);">Aharoni</span>
<span class="t" style="left:227.00px;top:368.35px;font:400 20px/20px 'Liberation Serif';color:#333333;transform:scaleX(1.1144);">Aldhabi</span>
<span class="t" style="left:227.00px;top:399.88px;font:400 22px/22px 'Liberation Serif';color:#3a3a3a;transform:scaleX(0.9730);-webkit-text-stroke:0.5px #3a3a3a;">ALGERIAN</span>
<span class="t" style="left:227.00px;top:436.03px;font:400 18px/18px 'Liberation Serif';color:#333333;transform:scaleX(1.1139);">Amasis MT Pro</span>
<span class="t" style="left:227.00px;top:467.99px;font:700 19px/19px 'Liberation Serif';color:#333333;transform:scaleX(1.1419);">Amasis MT Pro Black</span>
<span class="t" style="left:227.00px;top:501.63px;font:400 18px/18px 'Liberation Serif';color:#555555;transform:scaleX(1.0656);">Amasis MT Pro Light</span>
<span class="t" style="left:227.00px;top:534.63px;font:700 18px/18px 'Liberation Serif';color:#333333;transform:scaleX(1.1033);">Amasis MT Pro Medium</span>
<span class="t" style="left:227.00px;top:567.09px;font:400 19px/19px 'Liberation Serif';color:#333333;transform:scaleX(1.0495);">Angsana New</span>
<span class="t" style="left:227.00px;top:599.77px;font:400 19.5px/19.5px 'Liberation Serif';color:#333333;transform:scaleX(1.0327);">AngsanaUPC</span>
<span class="t" style="left:227.00px;top:632.57px;font:400 19.5px/19.5px 'Liberation Serif';color:#333333;transform:scaleX(1.0152);">Aparajita</span>
<span class="t" style="left:227.00px;top:671.00px;font:400 13.5px/13.5px 'Liberation Serif';color:#333333;transform:scaleX(0.9792);">Arabic Typesetting</span>
<span class="t" style="left:227.00px;top:696.07px;font:400 22px/22px 'Liberation Sans';color:#333333;transform:scaleX(0.9763);">Arial</span>
<span class="t" style="left:226.25px;top:733.28px;font:700 17.5px/17.5px 'Liberation Sans';color:#333333;transform:scaleX(1.1986);-webkit-text-stroke:0.6px #333;">Arial Black</span>
<span class="t" style="left:226.90px;top:763.22px;font:400 21px/21px 'Liberation Sans';color:#333333;transform:scaleX(0.8337);">Arial Narrow</span>
<svg style="left:0;top:0;z-index:3" width="1920" height="959" viewBox="0 0 1920 959"><g fill="none" stroke-linecap="round" stroke-linejoin="round">
<g transform="translate(0 0.0)"><path d="M524.5 249.6 A4.5 4.5 0 1 1 525.25 241 A4.95 4.95 0 0 1 534.5 243.25 A3.25 3.25 0 1 1 534.3 249.5" stroke="#333" stroke-width="1.05"/><path d="M529.6 244.2 V253.3 M527 250.6 L529.6 253.4 L532.2 250.6" stroke="#1e88dd" stroke-width="1.25"/></g>
<g transform="translate(0 33.0)"><path d="M524.5 249.6 A4.5 4.5 0 1 1 525.25 241 A4.95 4.95 0 0 1 534.5 243.25 A3.25 3.25 0 1 1 534.3 249.5" stroke="#333" stroke-width="1.05"/><path d="M529.6 244.2 V253.3 M527 250.6 L529.6 253.4 L532.2 250.6" stroke="#1e88dd" stroke-width="1.25"/></g>
<g transform="translate(0 132.0)"><path d="M524.5 249.6 A4.5 4.5 0 1 1 525.25 241 A4.95 4.95 0 0 1 534.5 243.25 A3.25 3.25 0 1 1 534.3 249.5" stroke="#333" stroke-width="1.05"/><path d="M529.6 244.2 V253.3 M527 250.6 L529.6 253.4 L532.2 250.6" stroke="#1e88dd" stroke-width="1.25"/></g>
<g transform="translate(0 231.0)"><path d="M524.5 249.6 A4.5 4.5 0 1 1 525.25 241 A4.95 4.95 0 0 1 534.5 243.25 A3.25 3.25 0 1 1 534.3 249.5" stroke="#333" stroke-width="1.05"/><path d="M529.6 244.2 V253.3 M527 250.6 L529.6 253.4 L532.2 250.6" stroke="#1e88dd" stroke-width="1.25"/></g>
<g transform="translate(0 264.0)"><path d="M524.5 249.6 A4.5 4.5 0 1 1 525.25 241 A4.95 4.95 0 0 1 534.5 243.25 A3.25 3.25 0 1 1 534.3 249.5" stroke="#333" stroke-width="1.05"/><path d="M529.6 244.2 V253.3 M527 250.6 L529.6 253.4 L532.2 250.6" stroke="#1e88dd" stroke-width="1.25"/></g>
<g transform="translate(0 297.0)"><path d="M524.5 249.6 A4.5 4.5 0 1 1 525.25 241 A4.95 4.95 0 0 1 534.5 243.25 A3.25 3.25 0 1 1 534.3 249.5" stroke="#333" stroke-width="1.05"/><path d="M529.6 244.2 V253.3 M527 250.6 L529.6 253.4 L532.2 250.6" stroke="#1e88dd" stroke-width="1.25"/></g>
<g transform="translate(0 330.0)"><path d="M524.5 249.6 A4.5 4.5 0 1 1 525.25 241 A4.95 4.95 0 0 1 534.5 243.25 A3.25 3.25 0 1 1 534.3 249.5" stroke="#333" stroke-width="1.05"/><path d="M529.6 244.2 V253.3 M527 250.6 L529.6 253.4 L532.2 250.6" stroke="#1e88dd" stroke-width="1.25"/></g>
<g transform="translate(0 363.0)"><path d="M524.5 249.6 A4.5 4.5 0 1 1 525.25 241 A4.95 4.95 0 0 1 534.5 243.25 A3.25 3.25 0 1 1 534.3 249.5" stroke="#333" stroke-width="1.05"/><path d="M529.6 244.2 V253.3 M527 250.6 L529.6 253.4 L532.2 250.6" stroke="#1e88dd" stroke-width="1.25"/></g>
<g transform="translate(0 396.0)"><path d="M524.5 249.6 A4.5 4.5 0 1 1 525.25 241 A4.95 4.95 0 0 1 534.5 243.25 A3.25 3.25 0 1 1 534.3 249.5" stroke="#333" stroke-width="1.05"/><path d="M529.6 244.2 V253.3 M527 250.6 L529.6 253.4 L532.2 250.6" stroke="#1e88dd" stroke-width="1.25"/></g>
<g transform="translate(0 429.0)"><path d="M524.5 249.6 A4.5 4.5 0 1 1 525.25 241 A4.95 4.95 0 0 1 534.5 243.25 A3.25 3.25 0 1 1 534.3 249.5" stroke="#333" stroke-width="1.05"/><path d="M529.6 244.2 V253.3 M527 250.6 L529.6 253.4 L532.2 250.6" stroke="#1e88dd" stroke-width="1.25"/></g>
</g></svg>
</div>

</body></html>
